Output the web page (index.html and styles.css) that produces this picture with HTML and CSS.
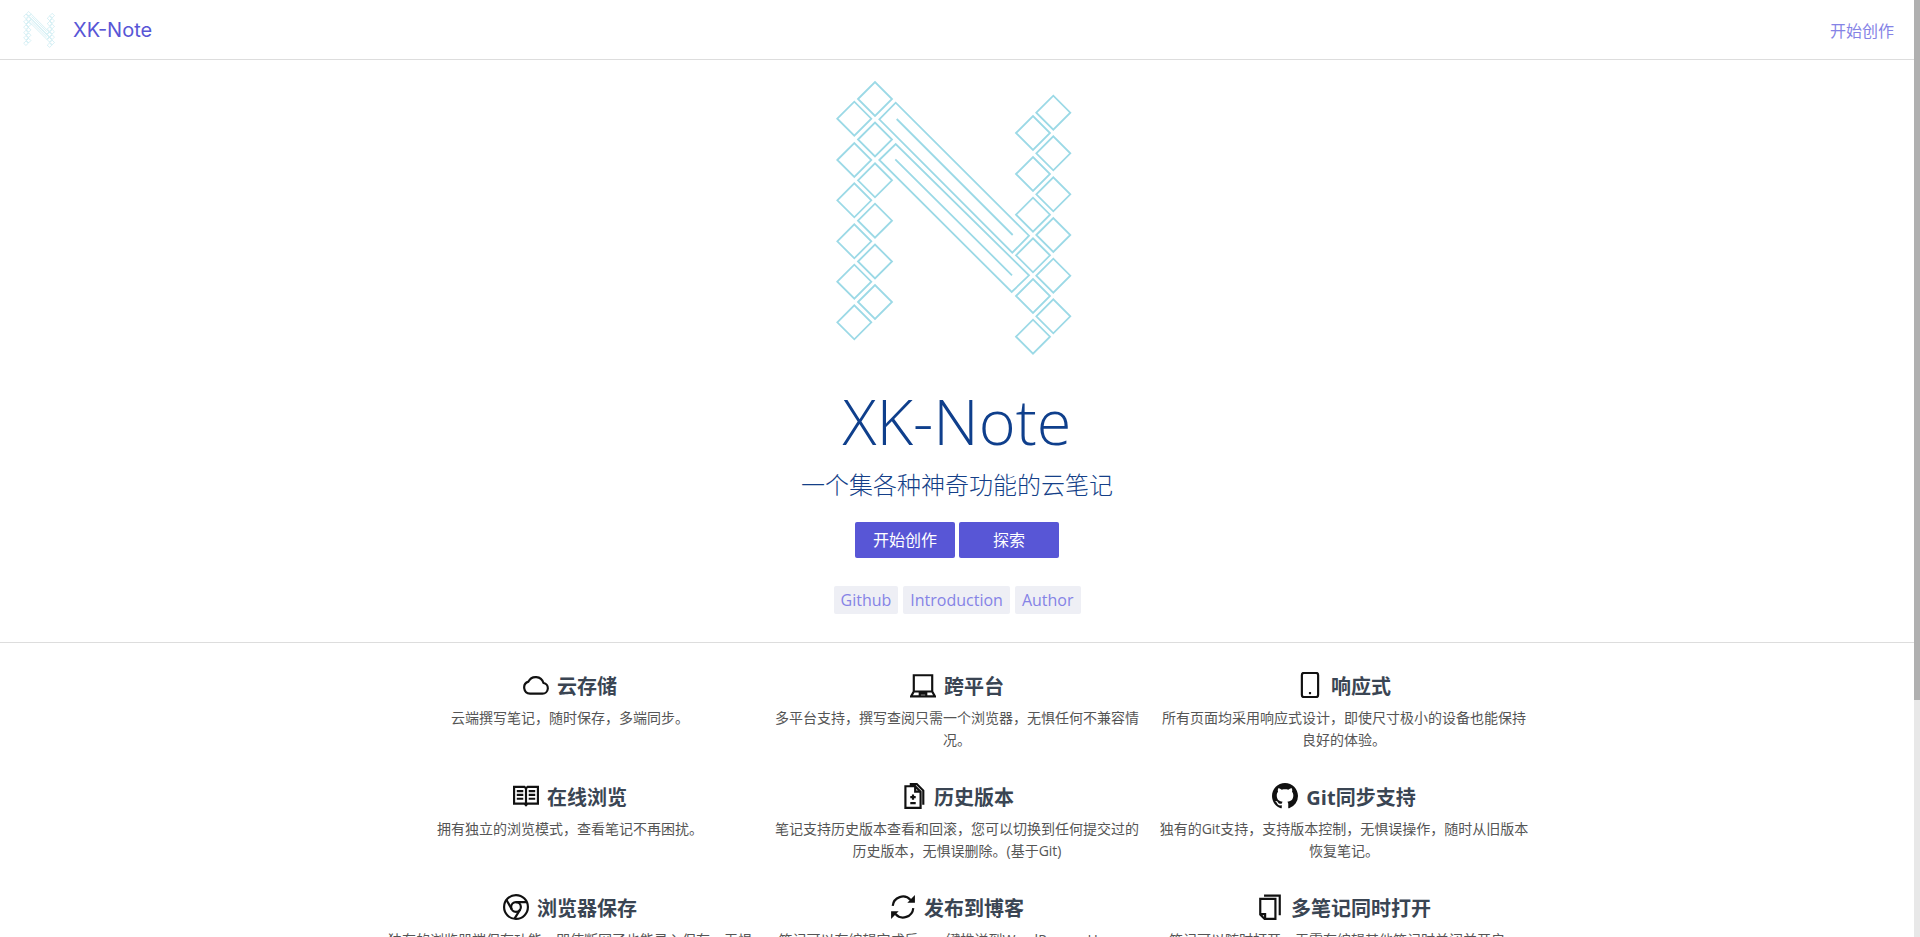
FILE: index.html
```html
<!DOCTYPE html>
<html>
<head>
	<title>XK-Note</title>
	<meta charset="utf-8">
	<link rel="stylesheet" href="styles.css">
</head>
<body>
<svg class="defs" width="0" height="0">
	<symbol id="logo" viewBox="832 78 250 280">
		<g fill="none" stroke="#9bd9e6">
			<!-- 左侧方块 -->
			<path d="M858 99l17-17 17 17-17 17zM858 139.500l17-17 17 17-17 17zM858 180.300l17-17 17 17-17 17zM858 220.700l17-17 17 17-17 17zM858 261.500l17-17 17 17-17 17zM858 302l17-17 17 17-17 17z"/>
			<path d="M837.300 118.700l17-17 17 17-17 17zM837.300 160l17-17 17 17-17 17zM837.300 200.300l17-17 17 17-17 17zM837.300 241.300l17-17 17 17-17 17zM837.300 281.700l17-17 17 17-17 17zM837.300 322.300l17-17 17 17-17 17z"/>
			<!-- 右侧方块 -->
			<path d="M1016 133l17-17 17 17-17 17zM1016 174l17-17 17 17-17 17zM1016 214.700l17-17 17 17-17 17zM1016 255.300l17-17 17 17-17 17zM1016 296l17-17 17 17-17 17zM1016 336.700l17-17 17 17-17 17z"/>
			<path d="M1036.300 112.700l17-17 17 17-17 17zM1036.300 153.300l17-17 17 17-17 17zM1036.300 194.300l17-17 17 17-17 17zM1036.300 235l17-17 17 17-17 17zM1036.300 275.700l17-17 17 17-17 17zM1036.300 316.300l17-17 17 17-17 17z"/>
			<!-- 中间斜杠 -->
			<path d="M879.300 119.300l16.400-16.600 133.300 133-16.700 17zM896.700 119l116 116"/>
			<path d="M879.300 160l16.400-16 133.300 131.300-17.300 16.700zM895.300 159.300l116.700 116"/>
		</g>
	</symbol>
</svg>

<div class="page">
	<!-- 导航条 -->
	<div class="navbar">
		<a class="brand" href="#">
			<svg class="brand-logo"><use href="#logo"/></svg>
			<span>XK-Note</span>
		</a>
		<a class="nav-link" href="#">开始创作</a>
	</div>

	<!-- 主体 -->
	<div class="hero">
		<svg class="hero-logo"><use href="#logo"/></svg>
		<h1>XK-Note</h1>
		<p class="tagline">一个集各种神奇功能的云笔记</p>
		<div class="actions">
			<a class="btn" href="#">开始创作</a>
			<a class="btn" href="#">探索</a>
		</div>
		<div class="links">
			<a href="#">Github</a>
			<a href="#">Introduction</a>
			<a href="#">Author</a>
		</div>
	</div>

	<div class="features">
		<div class="feature">
			<h2>
				<svg class="icon" viewBox="0 0 24 24"><path d="M6.500 20h11.500a5 5 0 0 0 .9-9.900A7.500 7.500 0 0 0 5 8.900 5.700 5.700 0 0 0 6.500 20z"/></svg>
				云存储
			</h2>
			<p>云端撰写笔记，随时保存，多端同步。</p>
		</div>
		<div class="feature">
			<h2>
				<svg class="icon" viewBox="0 0 24 24"><path d="M3.500 3h17v15h-17zM3.500 18L1 22.500h22L20.500 18M9 22v-2h6v2"/></svg>
				跨平台
			</h2>
			<p>多平台支持，撰写查阅只需一个浏览器，无惧任何不兼容情况。</p>
		</div>
		<div class="feature">
			<h2>
				<svg class="icon" viewBox="0 0 24 24"><rect x="4.500" y="0.800" width="15" height="22.400" rx="2"/><path class="dot" d="M11 18.500h2v2h-2z"/></svg>
				响应式
			</h2>
			<p>所有页面均采用响应式设计，即使尺寸极小的设备也能保持良好的体验。</p>
		</div>
		<div class="feature">
			<h2>
				<svg class="icon" viewBox="0 0 24 24"><path d="M1 3.500h9.500L12 5l1.500-1.500H23v15.500h-9.500L12 20.500 10.500 19H1zM12 5v15.500M3.500 7.500h6M3.500 11h6M3.500 14.500h6M14.500 7.500h6M14.500 11h6M14.500 14.500h6"/></svg>
				在线浏览
			</h2>
			<p>拥有独立的浏览模式，查看笔记不再困扰。</p>
		</div>
		<div class="feature">
			<h2>
				<svg class="icon" viewBox="0 0 24 24"><path d="M5 3h9l5 5v15H5zM14 3v5h5M9 1h6.500L21.500 7v13M12 10.500v5M9.500 13h5M9.500 18.500h5"/></svg>
				历史版本
			</h2>
			<p>笔记支持历史版本查看和回滚，您可以切换到任何提交过的历史版本，无惧误删除。(基于Git)</p>
		</div>
		<div class="feature">
			<h2>
				<svg class="icon github" viewBox="0 0 16 16"><path d="M8 0C3.580 0 0 3.580 0 8c0 3.540 2.290 6.530 5.470 7.590.4.070.55-.17.55-.38 0-.19-.01-.82-.01-1.490-2.010.37-2.530-.49-2.690-.94-.09-.23-.48-.94-.82-1.130-.28-.15-.68-.52-.01-.53.63-.01 1.080.58 1.230.82.72 1.210 1.870.87 2.330.66.07-.52.28-.87.51-1.070-1.780-.2-3.640-.89-3.640-3.950 0-.87.31-1.590.82-2.150-.08-.2-.36-1.020.08-2.120 0 0 .67-.21 2.200.82.64-.18 1.320-.27 2-.27.68 0 1.360.09 2 .27 1.530-1.040 2.200-.82 2.200-.82.44 1.100.16 1.920.08 2.120.51.56.82 1.270.82 2.150 0 3.070-1.870 3.750-3.650 3.950.29.25.54.73.54 1.480 0 1.070-.01 1.930-.01 2.200 0 .21.15.46.55.38A8.013 8.013 0 0016 8c0-4.420-3.580-8-8-8z"/></svg>
				Git同步支持
			</h2>
			<p>独有的Git支持，支持版本控制，无惧误操作，随时从旧版本恢复笔记。</p>
		</div>
		<div class="feature">
			<h2>
				<svg class="icon" viewBox="0 0 24 24"><circle cx="12" cy="12" r="11"/><circle cx="12" cy="12" r="4.500"/><path d="M12 7.500h10M8.100 14.200L3 5M15.900 14.200L10.500 22.900"/></svg>
				浏览器保存
			</h2>
			<p>独有的浏览器端保存功能，即使断网了也能录入保存，无惧意外丢失。</p>
		</div>
		<div class="feature">
			<h2>
				<svg class="icon" viewBox="0 0 24 24"><path d="M2.500 11A9.500 9.500 0 0 1 19 5.500M21.500 13A9.500 9.500 0 0 1 5 18.500"/><path class="dot" d="M16 8h7V1zM8 16H1v7z"/></svg>
				发布到博客
			</h2>
			<p>笔记可以在编辑完成后，一键推送到WordPress、Hexo、简书等平台。</p>
		</div>
		<div class="feature">
			<h2>
				<svg class="icon" viewBox="0 0 24 24"><path d="M3 4.500h14v18.500H7l-4-4zM3 18.500h4.500V23M6.500 1.500H21v18"/></svg>
				多笔记同时打开
			</h2>
			<p>笔记可以随时打开，无需在编辑其他笔记时关闭并开启。</p>
		</div>
	</div>
</div>

<div class="scrollbar"><div class="scrollbar-thumb"></div></div>
</body>
</html>
```

FILE: styles.css
```css
html,body{
	padding: 0;
	margin: 0;
	height: 100%;
	overflow: hidden;
}

body{
	display: flex;
	background-color: #fff;
	font-family: "Open Sans", "Noto Sans CJK SC", sans-serif;
	color: #3a4553;
}

a{
	text-decoration: none;
}

.defs{
	position: absolute;
}

.page{
	flex: 1;
	min-width: 0;
	height: 100%;
	overflow: hidden;
}

.scrollbar{
	flex: none;
	width: 6px;
	background-color: #e8e8e8;
}
.scrollbar-thumb{
	height: 700px;
	background-color: #b0b0b0;
}

.navbar{
	display: flex;
	justify-content: space-between;
	align-items: center;
	height: 59px;
	padding: 0 20px 0 23px;
	border-bottom: 1px solid #ddd;
}
.brand{
	display: flex;
	align-items: center;
	gap: 17px;
	color: #5856d6;
	font-family: "Inter", sans-serif;
	font-size: 20px;
}
.brand-logo{
	width: 33px;
	height: 37px;
	stroke-width: 3;
}
.nav-link{
	color: #8583e6;
	font-size: 16px;
}

.hero{
	display: flex;
	flex-direction: column;
	align-items: center;
	height: 583px;
	padding-top: 18px;
	box-sizing: border-box;
	border-bottom: 1px solid #ddd;
}
.hero-logo{
	width: 250px;
	height: 280px;
	stroke-width: 1.8;
}
.hero h1{
	margin: 23px 0 0;
	font-size: 63px;
	line-height: 80px;
	font-weight: 300;
	color: #0f3f8c;
}
.tagline{
	margin: 6px 0 0;
	font-size: 24px;
	line-height: 36px;
	font-weight: 300;
	color: #143f88;
}
.actions{
	display: flex;
	gap: 4px;
	margin-top: 19px;
}
.btn{
	width: 100px;
	height: 36px;
	line-height: 36px;
	text-align: center;
	border-radius: 2px;
	background-color: #5856d6;
	color: #fff;
	font-size: 16px;
}
.links{
	display: flex;
	gap: 5px;
	margin-top: 28px;
}
.links a{
	height: 28px;
	line-height: 28px;
	padding: 0 7px;
	border-radius: 2px;
	background-color: #eeeff5;
	color: #8583e6;
	font-size: 16px;
}

.features{
	display: grid;
	grid-template-columns: repeat(3, 370px);
	justify-content: center;
	column-gap: 17px;
	grid-auto-rows: 111px;
	padding-top: 25px;
}
.feature{
	text-align: center;
}
.feature h2{
	display: flex;
	justify-content: center;
	align-items: center;
	gap: 8px;
	margin: 0;
	height: 34px;
	font-size: 20px;
	font-weight: 700;
}
.feature p{
	margin: 5px 0 0;
	font-size: 14px;
	line-height: 22.4px;
	color: #555;
}

.icon{
	width: 26px;
	height: 26px;
	flex: none;
	fill: none;
	stroke: #111;
	stroke-width: 2;
}
.icon .dot{
	fill: #111;
	stroke: none;
}
.icon.github{
	fill: #111;
	stroke: none;
}
```
